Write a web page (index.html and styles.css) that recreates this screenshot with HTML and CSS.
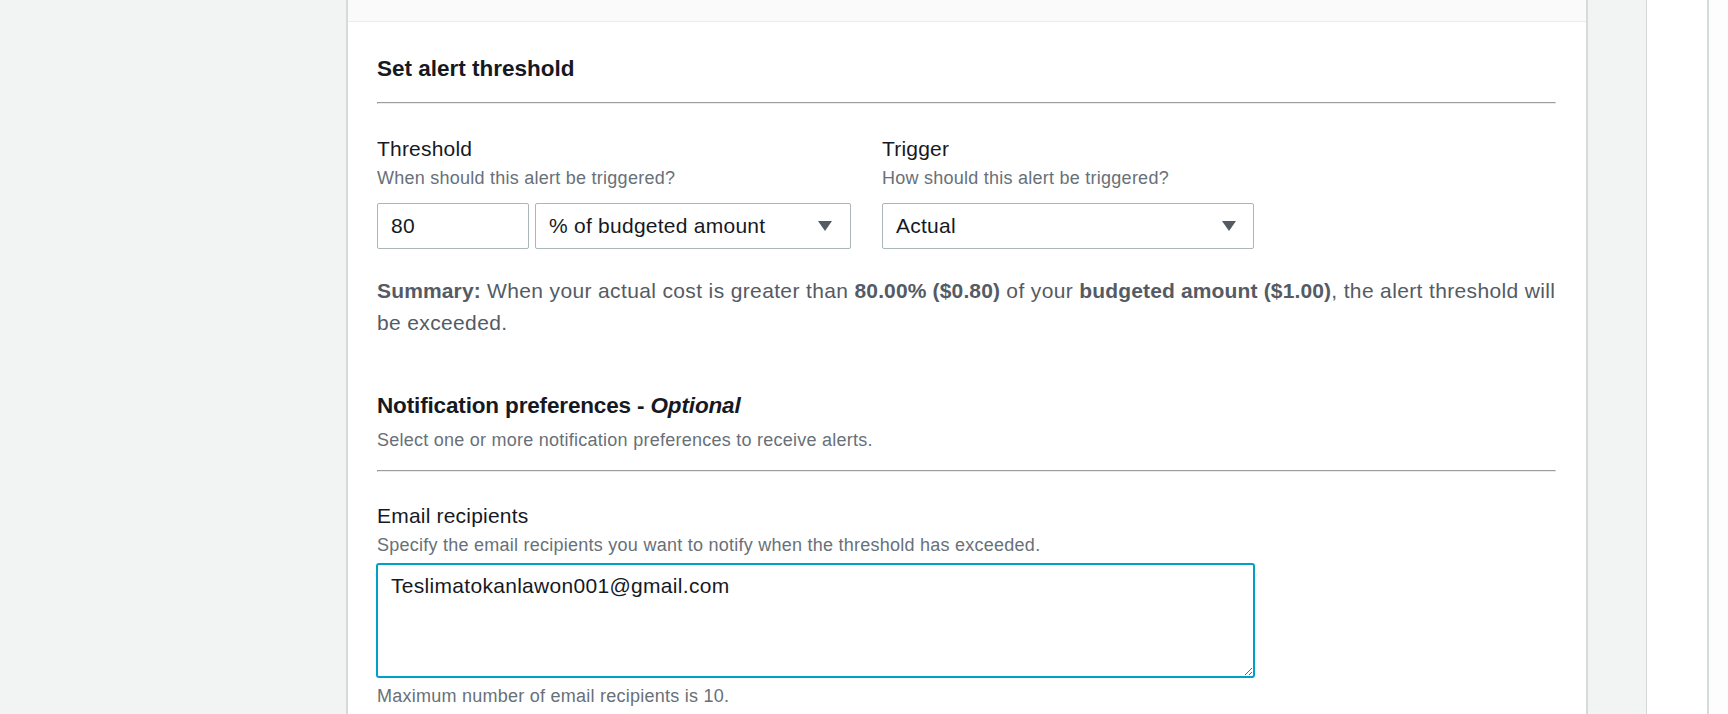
FILE: index.html
```html
<!DOCTYPE html>
<html lang="en">
<head>
<meta charset="utf-8">
<title>Set alert threshold</title>
<link rel="stylesheet" href="styles.css">
</head>
<body>
<div class="page">
  <div class="backdrop"></div>
  <main class="card">
    <div class="card-top"></div>
    <div class="card-body">
      <h2 class="heading">Set alert threshold</h2>
      <hr class="divider">
      <div class="row">
        <div class="field field-threshold">
          <div class="label">Threshold</div>
          <div class="desc">When should this alert be triggered?</div>
          <div class="controls">
            <input class="input input-num" type="text" value="80">
            <div class="select select-unit">
              <span class="select-text">% of budgeted amount</span>
              <svg class="caret" width="14" height="10" viewBox="0 0 14 10"><path d="M0 0h14L7 10z"/></svg>
            </div>
          </div>
        </div>
        <div class="field field-trigger">
          <div class="label">Trigger</div>
          <div class="desc">How should this alert be triggered?</div>
          <div class="controls">
            <div class="select select-trigger">
              <span class="select-text">Actual</span>
              <svg class="caret" width="14" height="10" viewBox="0 0 14 10"><path d="M0 0h14L7 10z"/></svg>
            </div>
          </div>
        </div>
      </div>
      <p class="summary"><b>Summary:</b> When your actual cost is greater than <b>80.00% ($0.80)</b> of your <b>budgeted amount ($1.00)</b>, the alert threshold will be exceeded.</p>

      <h2 class="heading heading-notif">Notification preferences - <i>Optional</i></h2>
      <div class="desc desc-notif">Select one or more notification preferences to receive alerts.</div>
      <hr class="divider divider-notif">
      <div class="label label-email">Email recipients</div>
      <div class="desc">Specify the email recipients you want to notify when the threshold has exceeded.</div>
      <textarea class="textarea">Teslimatokanlawon001@gmail.com</textarea>
      <div class="desc hint">Maximum number of email recipients is 10.</div>
    </div>
  </main>
  <div class="gutter"></div>
  <aside class="side"></aside>
  <div class="edge"></div>
</div>
</body>
</html>
```
FILE: styles.css
```css
* { box-sizing: border-box; }
html, body { margin: 0; padding: 0; }
body {
  font-family: "Liberation Sans", Arial, sans-serif;
  background: #f2f3f3;
  color: #16191f;
  overflow: hidden;
}
.page {
  display: flex;
  height: 714px;
  overflow: hidden;
}
.backdrop {
  width: 346px;
  flex: none;
  background: #f2f3f3;
}
.card {
  width: 1242px;
  flex: none;
  background: #ffffff;
  border-left: 2px solid #d5dbdb;
  border-right: 2px solid #d5dbdb;
}
.card-top {
  height: 22px;
  background: #fafafa;
  border-bottom: 1px solid #eaeded;
}
.card-body {
  padding: 32px 30px 0 29px;
}
.heading {
  margin: 0 0 18px;
  font-size: 22.5px;
  line-height: 30px;
  font-weight: 700;
  color: #16191f;
}
.heading i { font-style: italic; }
.heading-notif { letter-spacing: -0.15px; }
.divider {
  margin: 0;
  height: 0;
  border: 0;
  border-top: 1px solid #9c9c9c;
  border-left: 1px solid #9c9c9c;
  border-bottom: 1px solid #ececec;
  border-right: 1px solid #ececec;
}
.row {
  display: flex;
  gap: 31px;
  margin-top: 30px;
}
.field-threshold { width: 474px; }
.label {
  font-size: 21px;
  line-height: 30px;
  letter-spacing: 0.2px;
  color: #16191f;
}
.desc {
  margin-top: 1px;
  font-size: 18px;
  line-height: 26px;
  letter-spacing: 0.25px;
  color: #687078;
}
.controls {
  display: flex;
  gap: 6px;
  margin-top: 12px;
}
.input, .select {
  height: 46px;
  border: 1px solid #aab7b8;
  border-radius: 2px;
  background: #fff;
  font-family: inherit;
  font-size: 21px;
  letter-spacing: 0.25px;
  color: #16191f;
}
.input-num {
  width: 152px;
  padding: 0 13px;
  outline: none;
}
.select {
  display: flex;
  align-items: center;
  justify-content: space-between;
  padding: 0 18px 0 13px;
}
.select-unit { width: 316px; }
.select-trigger { width: 372px; padding-right: 17px; }
.caret { display: block; fill: #545b64; }
.summary {
  margin: 26px -8px 0 0;
  font-size: 21px;
  line-height: 32px;
  letter-spacing: 0.36px;
  color: #545b64;
}
.summary b { font-weight: 700; letter-spacing: 0.15px; }
.heading-notif {
  margin: 52px 0 0;
}
.desc-notif { margin-top: 6px; }
.divider-notif { margin-top: 17px; }
.label-email { margin-top: 29px; }
.textarea {
  display: block;
  margin: 5px 0 0 -1px;
  width: 879px;
  height: 115px;
  padding: 6px 13px;
  border: 2px solid #00a1c9;
  border-radius: 3px;
  font-family: inherit;
  font-size: 21px;
  line-height: 30px;
  letter-spacing: 0.3px;
  color: #16191f;
  outline: none;
  resize: vertical;
}
.hint { margin-top: 5px; }
.gutter {
  width: 58px;
  flex: none;
  background: #f2f3f3;
}
.side {
  width: 61px;
  flex: none;
  background: #ffffff;
  border-left: 1px solid #d5dbdb;
}
.edge {
  flex: 1;
  background: #fdfdfd;
  border-left: 2px solid #d5dbdb;
}
```
